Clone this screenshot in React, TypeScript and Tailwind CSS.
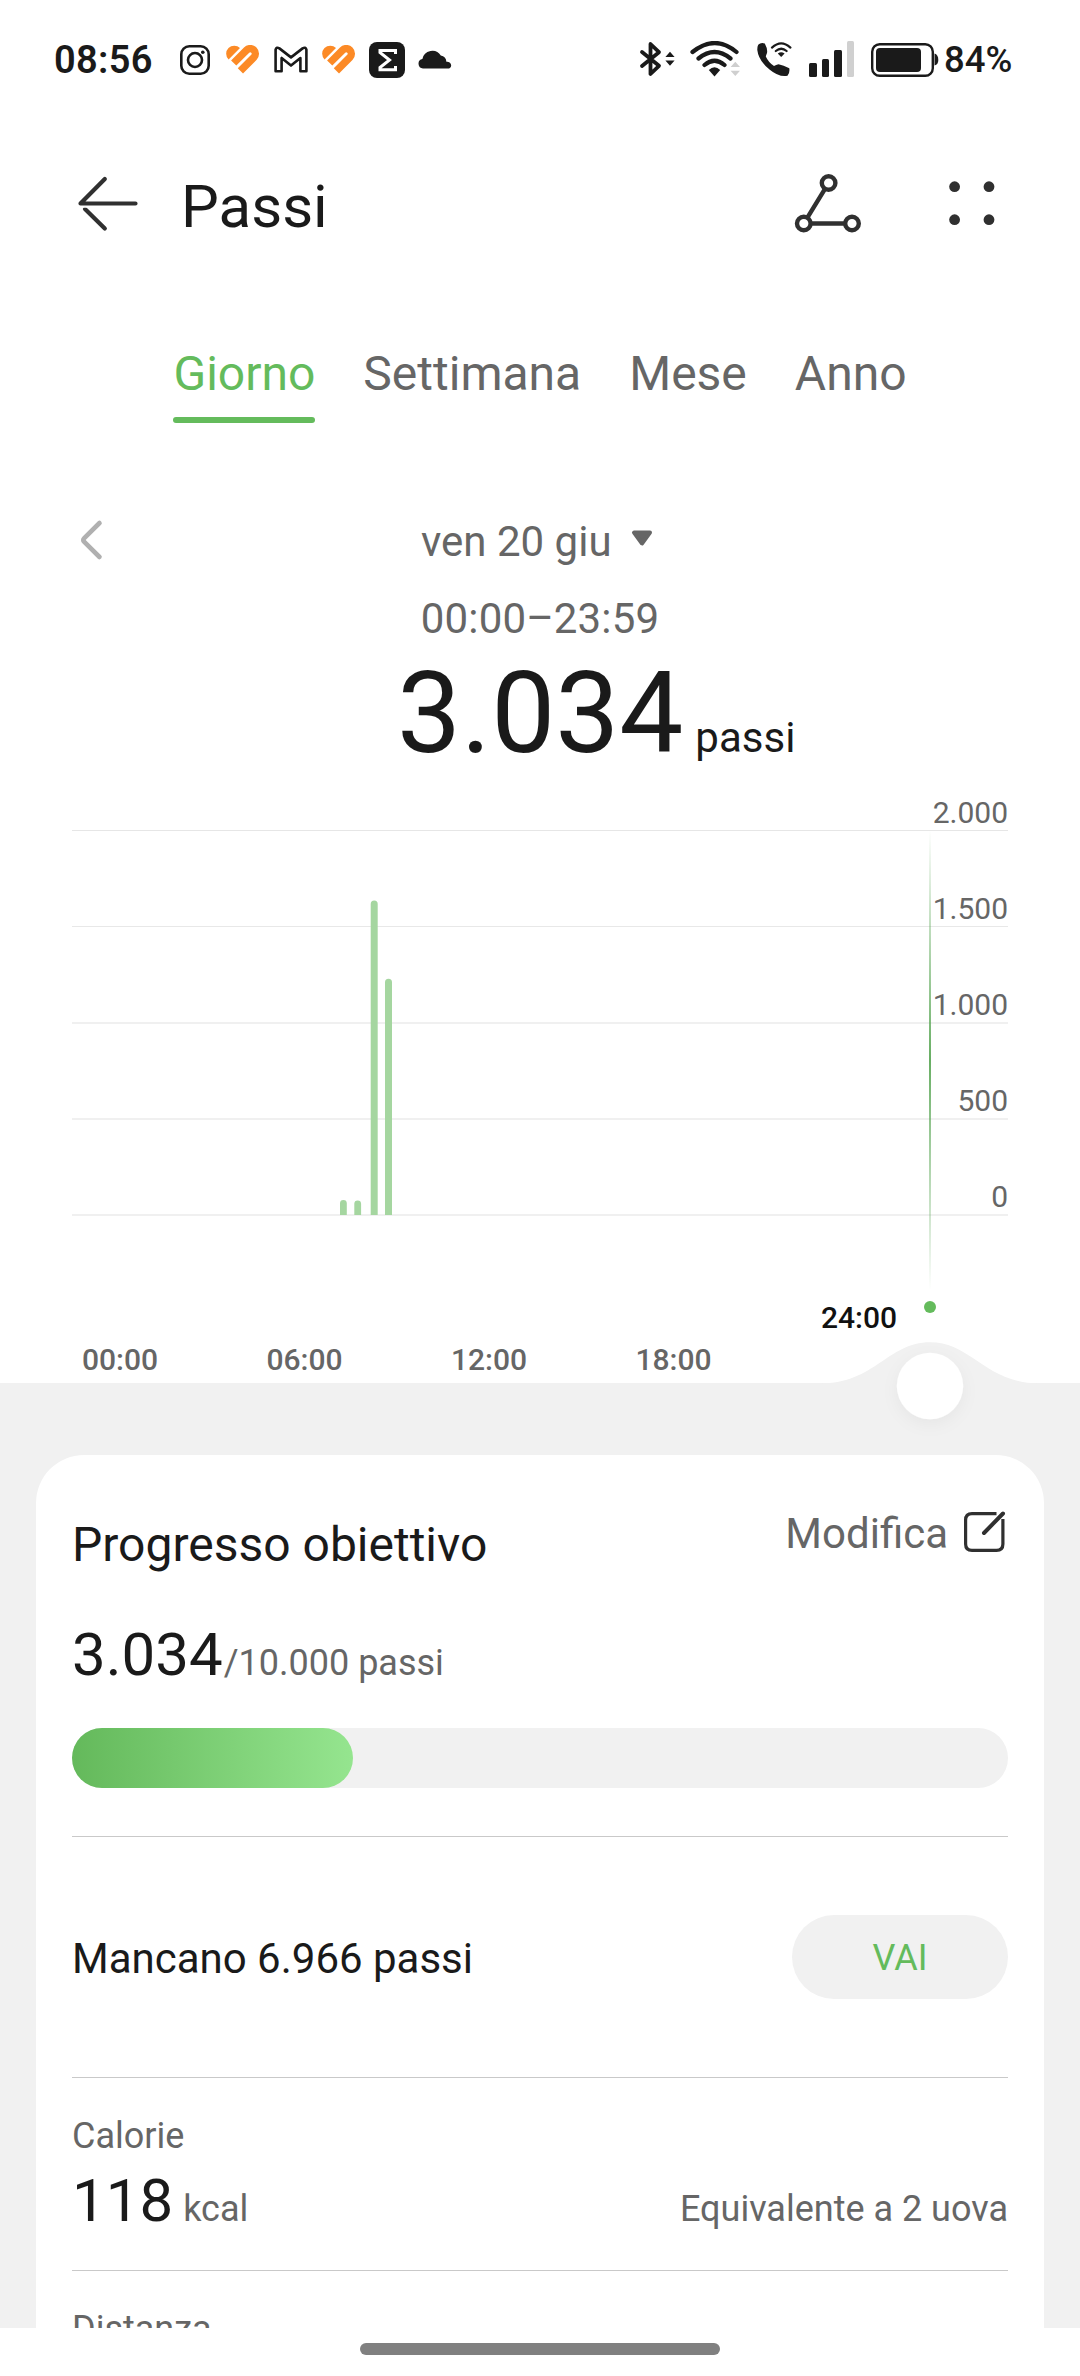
import React from "react";

const INK = "#1a1a1a";

function Heart({ className }: { className: string }) {
  return (
    <svg className={className} width="34" height="30" viewBox="0 0 34 30" fill="none">
      <path d="M2.600 14.600 A7.900 7.900 0 0 1 14 3 Z" fill="#fc8a26" />
      <path d="M7.700 18 L20.600 5.100 A5.125 5.125 0 0 1 27.850 12.350 L14.400 25.800" stroke="#fc8a26" strokeWidth="7.400" />
    </svg>
  );
}

function StatusBar() {
  return (
    <div className="flex h-[120px] items-start pl-[54px] pt-[41px] text-[#1a1a1a]">
      <span className="w-[100px] text-[38px] font-semibold leading-[38px] tracking-[0.3px]">08:56</span>
      <svg className="ml-[26px] mt-[4px]" width="30" height="30" viewBox="0 0 30 30" fill="none" stroke={INK}>
        <rect x="1.3" y="1.3" width="27.4" height="27.4" rx="8" strokeWidth="2.6" />
        <circle cx="15" cy="15" r="7" strokeWidth="2.6" />
        <circle cx="22.8" cy="7.2" r="1.8" fill={INK} stroke="none" />
      </svg>
      <Heart className="ml-[16px] mt-[4px]" />
      <svg className="ml-[14px] mt-[5px]" width="34" height="28" viewBox="0 0 34 28" fill="none" stroke={INK} strokeWidth="2.6" strokeLinejoin="round">
        <path d="M1.6 25.2 V3.6 Q2.4 .6 5.4 2.4 L17 11.4 L28.6 2.4 Q31.6 .6 32.4 3.6 V25.2 H26.4 V12 L17 19.6 L7.6 12 V25.2 Z" />
      </svg>
      <Heart className="ml-[14px] mt-[4px]" />
      <svg className="ml-[13px] mt-[1px]" width="36" height="36" viewBox="0 0 36 36">
        <rect width="36" height="36" rx="8" fill={INK} />
        <path d="M26.500 12 V8.500 H11 V10.500 L20.500 18 L11 25.500 V27.800 H26.500 V24" fill="none" stroke="#fff" strokeWidth="3" />
      </svg>
      <svg className="ml-[13px] mt-[9px]" width="34" height="19" viewBox="0 0 34 19">
        <path d="M5 18.500 A4.800 4.800 0 0 1 4.400 9 A10 10 0 0 1 22.800 5.600 A7 7 0 0 1 28.400 11.800 A4 4 0 0 1 33.200 15.400 Q33 18.500 29.600 18.500 Z" fill={INK} />
      </svg>

      <svg className="ml-[187px]" width="38" height="36" viewBox="0 0 38 36" fill="none">
        <path d="M3 11 L20 24.800 L11.500 33 V3 L20 11.200 L3 25" stroke={INK} strokeWidth="3.800" strokeLinejoin="round" strokeLinecap="round" />
        <path d="M31 10.800 L35.600 16 H26.400 Z M31 24.800 L35.600 19.600 H26.400 Z" fill={INK} />
      </svg>
      <svg className="ml-[13px]" width="52" height="36" viewBox="0 0 52 36" fill="none">
        <path d="M2.500 11 Q25 -7 46.500 11 M8.500 17.500 Q24.500 4.500 40.500 17.500 M14.500 24 Q24.500 15.500 34.500 24" stroke={INK} strokeWidth="4.200" strokeLinecap="round" />
        <path d="M24.500 35.500 L18.800 29 Q24.500 23.500 30.200 29 Z" fill={INK} />
        <path d="M45.300 20.800 L50 26 H40.600 Z M45.300 35 L50 29.800 H40.600 Z" fill="#cfcfcf" />
      </svg>
      <svg className="ml-[14px]" width="36" height="36" viewBox="0 0 36 36" fill="none">
        <path d="M2.200 3.800 Q5 .8 8.800 2.500 Q11.800 8 11 12 Q10 14.500 9.800 15.500 Q12.500 21.500 18 25 Q20 23.800 22.500 23.200 Q27.500 24 33.300 27.200 Q34 32 31.500 34.800 Q23 36.500 13.500 28.500 Q2.500 19.500 1.300 9 Q1.200 5.500 2.200 3.800 Z" fill={INK} />
        <path d="M16 6.600 Q25.200 -1.800 34.400 6.600 M19.800 10 Q25.200 5.500 30.600 10" stroke={INK} strokeWidth="2.200" strokeLinecap="round" />
        <path d="M25.200 16 L21.800 12.600 Q25.200 10 28.600 12.600 Z" fill={INK} />
      </svg>
      <div className="ml-[17px] flex h-[36px] items-end gap-[5px]">
        <i className="h-[14px] w-[7.600px] rounded-[1.500px] bg-[#1a1a1a]" />
        <i className="h-[18px] w-[7.600px] rounded-[1.500px] bg-[#1a1a1a]" />
        <i className="h-[27px] w-[7.600px] rounded-[1.500px] bg-[#1a1a1a]" />
        <i className="h-[36px] w-[7.600px] rounded-[1.500px] bg-[#d0d0d0]" />
      </div>
      <svg className="ml-[16.600px] mt-[2px]" width="68" height="34" viewBox="0 0 68 34">
        <rect x="1.200" y="1.200" width="60.600" height="31.600" rx="7.500" fill="none" stroke={INK} strokeWidth="2.400" />
        <rect x="5" y="5" width="45" height="24" rx="4" fill={INK} />
        <path d="M63.500 10.500 Q67.300 11.500 67.300 17 Q67.300 21.500 63.500 22.500 Z" fill={INK} />
      </svg>
      <span className="ml-[5px] text-[36.500px] font-medium leading-[38px]">84%</span>
    </div>
  );
}

function Header() {
  return (
    <header className="flex h-[168px] items-center pl-[76px] pr-[85px]">
      <svg width="64" height="56" viewBox="0 0 64 56" fill="none" stroke="#303030" strokeWidth="4.200" strokeLinecap="round">
        <path d="M59.500 27.500 H4.500 L28.800 3" strokeLinejoin="round" />
        <path d="M9 33 L28.800 52.600" />
        <path d="M3 31 H12" stroke="#fff" strokeWidth="1.600" />
      </svg>
      <h1 className="mt-[5px] ml-[41px] text-[60px] font-normal leading-[70px] text-[#1a1a1a]">Passi</h1>
      <svg className="ml-auto" width="68" height="60" viewBox="0 0 68 60" fill="none" stroke="#303030" strokeWidth="4.400">
        <circle cx="34.600" cy="9" r="6.800" />
        <circle cx="9.800" cy="49.500" r="6.800" />
        <circle cx="58" cy="49.500" r="6.800" />
        <path d="M31 14.800 L13.400 43.600 M16.600 49.500 H51.200" />
      </svg>
      <svg className="ml-[87px]" width="46" height="46" viewBox="0 0 46 46" fill="#303030">
        <circle cx="5.600" cy="5.700" r="5.400" />
        <circle cx="40" cy="5.700" r="5.400" />
        <circle cx="5.600" cy="38.700" r="5.400" />
        <circle cx="40" cy="38.700" r="5.400" />
      </svg>
    </header>
  );
}

function Tabs() {
  return (
    <nav className="mt-[56px] flex h-[80px] justify-center gap-[48px] text-[48px] leading-[60px] text-[#666]">
      <div className="flex flex-col text-[#64bb5c]">
        <span>Giorno</span>
        <i className="mt-[13px] h-[6px] rounded-full bg-[#64bb5c]" />
      </div>
      <span>Settimana</span>
      <span>Mese</span>
      <span>Anno</span>
    </nav>
  );
}

const rows = [
  { label: "2.000", cls: "h-[49px] border-b border-[#e6e6e6]" },
  { label: "1.500", cls: "h-[96px] border-b border-[#e8e8e8]" },
  { label: "1.000", cls: "h-[97px] border-b-2 border-[#f0f0f0]" },
  { label: "500", cls: "h-[96px] border-b-2 border-[#f0f0f0]" },
  { label: "0", cls: "h-[96px] border-b-2 border-[#f0f0f0]" },
];

function Chart() {
  return (
    <section className="relative h-[601px] px-[72px]">
      {rows.map((r) => (
        <div key={r.label} className={`flex items-end justify-end text-[30px] leading-[34px] text-[#666] ${r.cls}`}>
          {r.label}
        </div>
      ))}
      <div className="mt-[84px] flex pl-[749px] text-[30px] font-medium leading-[36px] text-[#111]">24:00</div>
      <div className="mt-[6px] flex pl-[10px] text-[30px] font-medium leading-[36px] text-[#666]">
        {["00:00", "06:00", "12:00", "18:00"].map((t) => (
          <span key={t} className="w-[184.500px]">{t}</span>
        ))}
      </div>
      <svg className="absolute left-0 top-0" width="1080" height="673" viewBox="0 782 1080 673">
        <defs>
          <linearGradient id="cursor" gradientUnits="userSpaceOnUse" x1="0" y1="830" x2="0" y2="1290">
            <stop offset="0" stopColor="#57a552" stopOpacity="0" />
            <stop offset=".5" stopColor="#57a552" stopOpacity=".9" />
            <stop offset="1" stopColor="#57a552" stopOpacity="0" />
          </linearGradient>
          <filter id="knob" x="-60%" y="-60%" width="220%" height="220%">
            <feDropShadow dx="0" dy="5" stdDeviation="8" floodColor="#000" floodOpacity=".045" />
          </filter>
        </defs>
        <g fill="#a5d6a0">
          <path d="M340 1215 V1203.300 a3.400 3.400 0 0 1 6.800 0 V1215 Z" />
          <path d="M354.300 1215 V1203.800 a3.400 3.400 0 0 1 6.800 0 V1215 Z" />
          <path d="M370.700 1215 V904 a3.500 3.500 0 0 1 7 0 V1215 Z" />
          <path d="M385 1215 V982.300 a3.500 3.500 0 0 1 7 0 V1215 Z" />
        </g>
        <rect x="929" y="830" width="2" height="460" fill="url(#cursor)" />
        <circle cx="930" cy="1307" r="6" fill="#64bb5c" />
        <path d="M820 1383.500 C875 1383.500 888 1342.300 930 1342.300 S985 1383.500 1040 1383.500 Z" fill="#f1f1f1" />
        <circle cx="930" cy="1386" r="33.200" fill="#fff" filter="url(#knob)" />
      </svg>
    </section>
  );
}

function GoalCard() {
  return (
    <section className="h-[873px] overflow-hidden rounded-t-[48px] bg-white px-[36px] text-[#1a1a1a]">
      <div className="flex items-start justify-between pt-[48px]">
        <h2 className="mt-[12px] text-[48px] font-normal leading-[60px]">Progresso obiettivo</h2>
        <div className="mt-[1px] flex text-[42px] leading-[60px] text-[#666]">
          Modifica
          <svg className="ml-[14px] mt-[6px]" width="46" height="44" viewBox="0 0 46 44" fill="none" stroke="#303030" strokeWidth="3.200">
            <path d="M34.500 3.600 H10 Q3.600 3.600 3.600 10 V34 Q3.600 40.400 10 40.400 H34.500 Q40.900 40.400 40.900 34 V9" />
            <path d="M22 23 L41 3.500" strokeWidth="4" strokeLinecap="round" />
          </svg>
        </div>
      </div>
      <div className="mt-[45px] flex h-[78px] items-baseline leading-[70px]">
        <span className="text-[60px]">3.034</span>
        <span className="ml-[1px] text-[36px] text-[#666]">/10.000 passi</span>
      </div>
      <div className="mt-[30px] h-[60px] rounded-full bg-[#f1f1f1]">
        <div className="h-full w-[281px] rounded-full bg-gradient-to-r from-[#64b95b] to-[#95e58f]" />
      </div>
      <div className="mt-[48px] flex h-[241px] items-center justify-between border-t border-[#c9c9c9]">
        <span className="mt-[3px] text-[42px] leading-[60px]">Mancano 6.966 passi</span>
        <button className="flex h-[84px] w-[216px] items-center justify-center rounded-full bg-[#f1f1f1] pt-[2px] text-[36px] text-[#64bb5c]">VAI</button>
      </div>
      <div className="flex h-[193px] flex-col border-t border-[#c9c9c9] pt-[36px]">
        <span className="text-[36px] leading-[44px] text-[#666]">Calorie</span>
        <div className="mt-[8px] flex items-baseline leading-[70px]">
          <span className="text-[60px]">118</span>
          <span className="ml-[10px] text-[36px] text-[#666]">kcal</span>
          <span className="ml-auto text-[36px] text-[#666]">Equivalente a 2 uova</span>
        </div>
      </div>
      <div className="h-[58px] border-t border-[#c9c9c9] pt-[36px] text-[36px] leading-[44px] text-[#666]">Distanza</div>
    </section>
  );
}

export default function App() {
  return (
    <div className="flex h-[2376px] w-[1080px] flex-col overflow-hidden bg-white font-['Roboto',sans-serif]">
      <StatusBar />
      <Header />
      <Tabs />
      <div className="mt-[88px] flex h-[60px] items-center text-[42px] leading-[60px] text-[#666]">
        <svg className="mb-[4px] ml-[78px]" width="26" height="44" viewBox="0 0 26 44" fill="none">
          <path d="M21.500 5 L6.300 20 Q4.400 22 6.300 24 L21.500 39" stroke="#b0b0b0" strokeWidth="4.600" strokeLinecap="round" />
        </svg>
        <span className="ml-[317px]">ven 20 giu</span>
        <svg className="ml-[18px] mt-[-6px]" width="24" height="20" viewBox="0 0 24 20">
          <path d="M4 3.500 H20 L12 14.500 Z" fill="#666" stroke="#666" strokeWidth="4" strokeLinejoin="round" />
        </svg>
      </div>
      <div className="mt-[17px] text-center text-[42px] leading-[60px] tracking-[0.15px] text-[#666]">00:00–23:59</div>
      <div className="mt-[-1px] flex h-[134px] items-baseline pl-[397px] text-[#1a1a1a]">
        <span className="text-[114px] leading-[130px]">3.034</span>
        <span className="ml-[12px] text-[42px]">passi</span>
      </div>
      <Chart />
      <div className="h-[945px] bg-[#f1f1f1] px-[36px] pt-[72px]">
        <GoalCard />
      </div>
      <footer className="flex h-[48px] justify-center pt-[15px]">
        <i className="h-[12px] w-[360px] rounded-full bg-[#808080]" />
      </footer>
    </div>
  );
}
